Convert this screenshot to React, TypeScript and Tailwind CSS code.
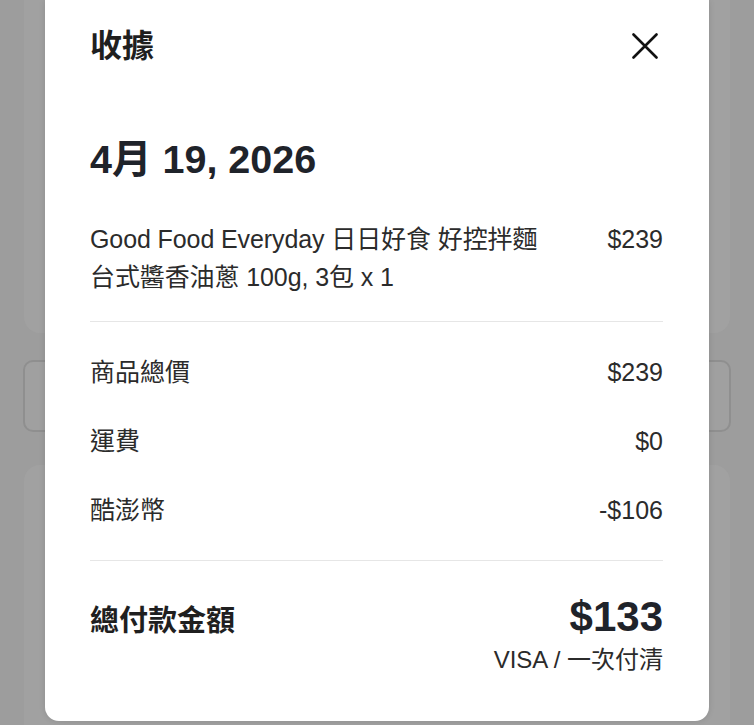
import React from "react";

const font = { fontFamily: '"Liberation Sans", "Noto Sans CJK TC", sans-serif' };

function Row({ label, value }: { label: string; value: string }) {
  return (
    <div className="flex h-[69px] items-center justify-between text-[25px] leading-[36px] text-[#2b2b2b]">
      <span>{label}</span>
      <span>{value}</span>
    </div>
  );
}

export default function App() {
  return (
    <div className="relative h-[725px] w-[754px] overflow-hidden bg-[#9d9d9d]" style={font}>
      {/* background page */}
      <div className="flex flex-col px-[24px]">
        <div className="h-[333px] rounded-b-[16px] bg-[#a1a1a1]" />
        <div className="mx-[-1px] mt-[27px] h-[72px] rounded-[10px] border-2 border-[#8f8f8f] bg-[#a0a0a0]" />
        <div className="mt-[33px] h-[300px] rounded-[16px] bg-[#a1a1a1]" />
      </div>

      {/* modal */}
      <div className="absolute left-[45px] top-0 flex h-[721px] w-[664px] flex-col rounded-b-[14px] bg-white pl-[45px] pr-[46px] shadow-[0_0_6px_rgba(0,0,0,0.12)]">
        <div className="flex h-[92px] items-center justify-between">
          <h1 className="text-[32px] font-bold leading-[40px] text-[#1f1f1f]">收據</h1>
          <svg width="26" height="26" viewBox="0 0 26 26" className="mr-[5px]">
            <path d="M1.5 1.5 L24.5 24.5 M24.5 1.5 L1.5 24.5" stroke="#111" strokeWidth="2.6" strokeLinecap="round" />
          </svg>
        </div>

        <div className="mt-[43px] text-[39.5px] font-bold leading-[48px] text-[#1f232a]">4月 19, 2026</div>

        <div className="mt-[37px] flex justify-between text-[25px] leading-[38px] text-[#2b2b2b]">
          <div className="w-[470px] tracking-[-0.1px]">
            <div>Good Food Everyday 日日好食 好控拌麵</div>
            <div>台式醬香油蔥 100g, 3包 x 1</div>
          </div>
          <span>$239</span>
        </div>

        <div className="mt-[25px] h-px bg-[#e6e6e6]" />

        <div className="mt-[15px] flex flex-col">
          <Row label="商品總價" value="$239" />
          <Row label="運費" value="$0" />
          <Row label="酷澎幣" value="-$106" />
        </div>

        <div className="mt-[16px] h-px bg-[#e6e6e6]" />

        <div className="mt-[34px] flex items-start justify-between">
          <span className="mt-[6px] text-[29px] font-bold leading-[40px] text-[#1f1f1f]">總付款金額</span>
          <div className="flex flex-col items-end">
            <span className="text-[42px] font-bold leading-[44px] text-[#1f232a]">$133</span>
            <span className="mt-[6px] text-[24px] leading-[30px] text-[#2b2b2b]">VISA / 一次付清</span>
          </div>
        </div>
      </div>
    </div>
  );
}
